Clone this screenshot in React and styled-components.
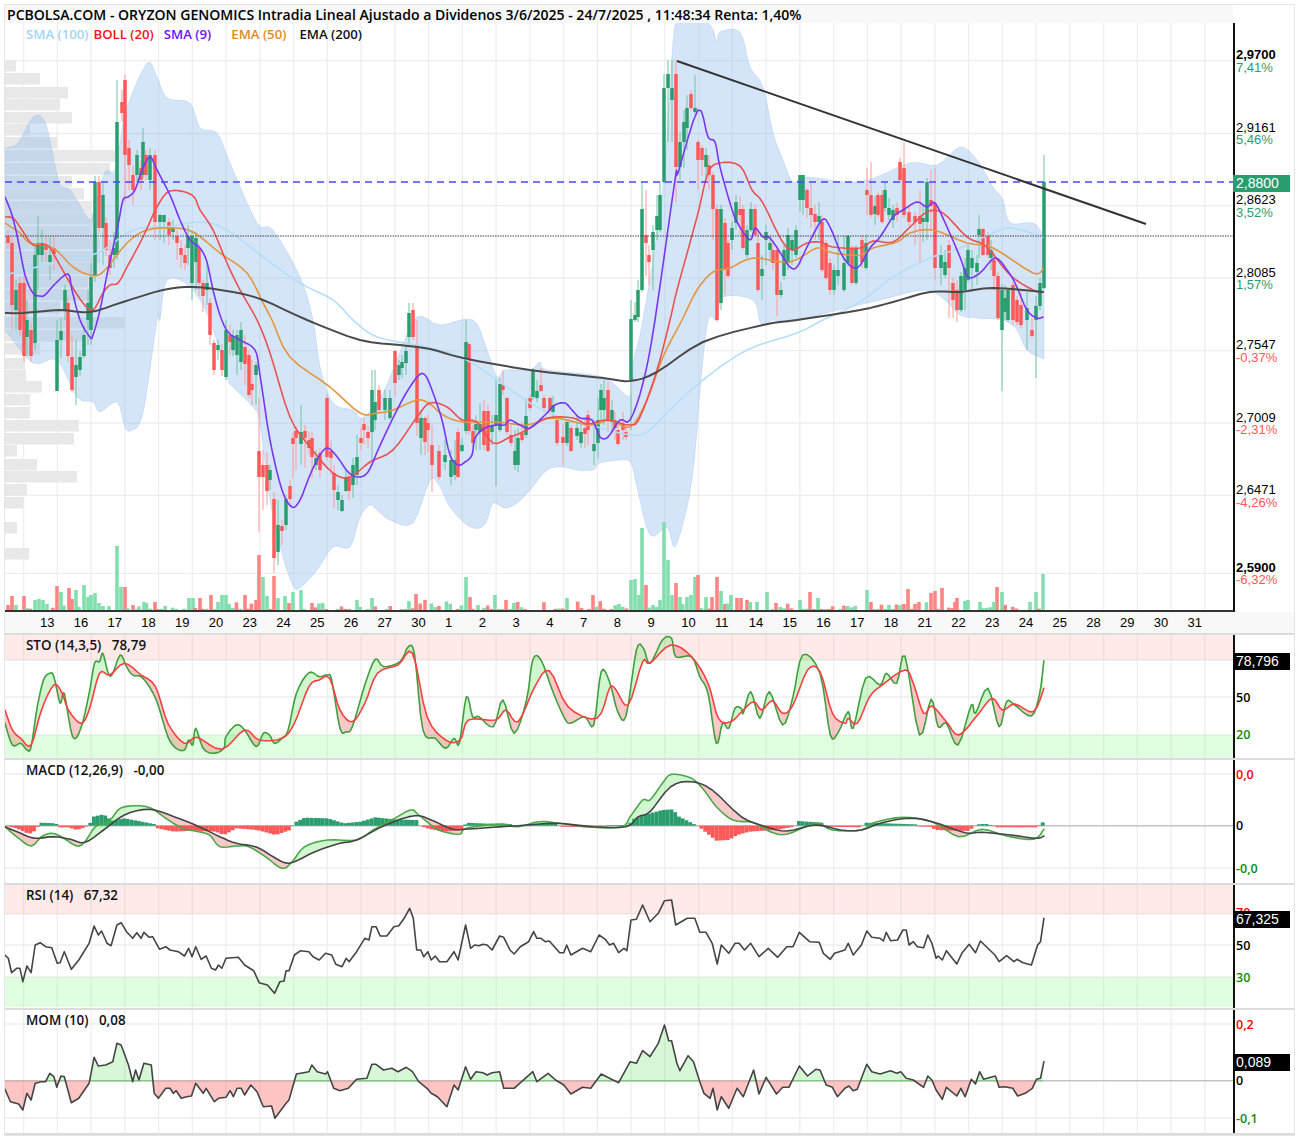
import React from "react";
import styled, { createGlobalStyle } from "styled-components";

const GlobalStyle = createGlobalStyle`
  html, body {
    margin: 0;
    background: #fff;
  }
`;

const UI_FONT = `"Open Sans", "Liberation Sans", sans-serif`;
const AXIS_FONT = `"Liberation Sans", Arial, sans-serif`;

const GREEN = "#2a9d6f";
const RED = "#ff5858";

// ---- helpers ----
const toPath = (pts) =>
  pts.map(([x, y], i) => `${i ? "L" : "M"}${x.toFixed(1)} ${y.toFixed(1)}`).join("");

const interp = (pts, x) => {
  if (x <= pts[0][0]) return pts[0][1];
  for (let i = 1; i < pts.length; i++) {
    if (x <= pts[i][0]) {
      const [x0, y0] = pts[i - 1];
      const [x1, y1] = pts[i];
      return y0 + ((y1 - y0) * (x - x0)) / (x1 - x0 || 1);
    }
  }
  return pts[pts.length - 1][1];
};

// catmull-rom resample, the moving averages are not polylines in the real chart
const smooth = (pts, forwardOnly = true) => {
  const out = [pts[0]];
  for (let i = 0; i < pts.length - 1; i++) {
    const p0 = pts[Math.max(i - 1, 0)];
    const p1 = pts[i];
    const p2 = pts[i + 1];
    const p3 = pts[Math.min(i + 2, pts.length - 1)];
    for (let s = 1; s <= 4; s++) {
      const t = s / 4;
      const at = (k) =>
        0.5 *
        (2 * p1[k] +
          (p2[k] - p0[k]) * t +
          (2 * p0[k] - 5 * p1[k] + 4 * p2[k] - p3[k]) * t * t +
          (3 * p1[k] - p0[k] - 3 * p2[k] + p3[k]) * t * t * t);
      out.push([forwardOnly ? Math.max(out[out.length - 1][0], at(0)) : at(0), at(1)]);
    }
  }
  return out;
};

// the lower panes were read off a crop at 2.412x horizontally and 3x vertically
const fromCrops = (left, right, top) => [
  ...left.map(([x, v]) => [x / 2.412, top + v / 3]),
  ...right.map(([x, v]) => [650 + x / 2.412, top + v / 3]),
];

// polygons between two lines, split by which one is on top
const areasBetween = (a, b, x0, x1) => {
  const up = [];
  const down = [];
  let run = null;
  let dir = 0;
  const close = () => {
    if (!run) return;
    const d = toPath([...run.map((p) => [p[0], p[1]]), ...[...run].reverse().map((p) => [p[0], p[2]])]) + "Z";
    (dir > 0 ? up : down).push({ d, from: run[0][0], to: run[run.length - 1][0] });
  };
  for (let x = x0; x <= x1; x += 0.5) {
    const ya = interp(a, x);
    const yb = interp(b, x);
    const s = ya < yb ? 1 : -1;
    if (s !== dir) {
      close();
      run = run ? [run[run.length - 1]] : [];
      dir = s;
    }
    run.push([x, ya, yb]);
  }
  close();
  return { up, down };
};

let seed = 7;
const rnd = () => {
  seed = (seed * 16807) % 2147483647;
  return seed / 2147483647;
};

// ---- price data ----
const GRID_X = Array.from({ length: 36 }, (_, i) => 23.6 + i * 33.75);
const PRICE_GRID_Y = [60.7, 133.5, 205.7, 278, 350.7, 423, 495.3, 573.3];

const PROFILE = [
  [60, 16], [73, 40], [87, 68], [99, 60], [112, 72], [124, 30], [137, 57], [150, 117], [163, 110],
  [176, 72], [188, 84], [201, 92], [213, 93], [226, 90], [238, 100], [251, 100], [263, 95], [276, 88],
  [289, 92], [302, 60], [317, 125], [330, 83], [343, 40], [358, 25], [370, 26], [381, 42], [394, 30],
  [407, 30], [420, 79], [433, 74], [445, 17], [459, 37], [471, 77], [484, 27], [497, 23], [522, 17], [548, 29],
];

const BAND_UPPER = smooth([
  [5, 148], [18, 143], [33, 117], [45, 122], [55, 165], [60, 185], [70, 190], [80, 205], [90, 220], [95, 205],
  [105, 172], [115, 170], [122, 130], [127, 107], [147, 63], [157, 77], [167, 98], [190, 103], [200, 128], [217, 133],
  [230, 163], [257, 223], [273, 230], [300, 277], [313, 320], [320, 367], [333, 403], [353, 410], [363, 418], [383, 393],
  [400, 352], [417, 317], [440, 325], [473, 320], [487, 350], [497, 377], [505, 370], [530, 370], [540, 362], [547, 370],
  [603, 377], [630, 397], [633, 363], [643, 320], [663, 187], [673, 43], [680, 23], [708, 23], [717, 42], [720, 32],
  [740, 32], [750, 67], [763, 87], [773, 133], [783, 160], [793, 182], [807, 177], [860, 182], [910, 163], [937, 165],
  [960, 147], [977, 160], [993, 187], [1003, 200], [1010, 223], [1033, 223], [1044, 237],
], false);

const BAND_LOWER = smooth([
  [1044, 359], [1027, 350],
  [1017, 330], [1003, 320], [977, 318], [960, 315], [945, 300], [925, 290], [880, 300], [830, 312], [790, 322], [773, 320],
  [767, 324], [760, 322], [753, 300], [723, 297], [717, 320], [708, 320], [700, 390], [697, 430], [693, 470], [687, 507],
  [675, 547], [667, 527], [650, 535], [637, 487], [631, 463], [620, 460], [600, 463], [593, 470], [577, 470], [563, 467],
  [547, 470], [530, 490], [517, 503], [505, 508], [493, 503], [487, 520], [480, 528], [467, 525], [450, 507], [440, 487],
  [430, 480], [413, 523], [390, 520], [377, 510], [370, 505], [360, 517], [350, 547], [333, 547], [317, 570], [300, 588],
  [293, 585], [283, 557], [270, 500], [260, 423], [253, 407], [233, 387], [227, 377], [210, 320], [190, 287], [167, 280],
  [160, 320], [157, 320], [143, 413], [132, 430], [125, 427], [117, 402], [100, 412], [93, 402], [77, 397], [57, 360],
  [33, 363], [5, 330],
], false);

const SMA9 = smooth([
  [5, 197], [12, 215], [18, 240], [25, 275], [33, 293], [40, 296], [45, 295], [55, 284], [68, 274], [72, 290], [80, 320],
  [90, 337], [93, 335], [100, 310], [108, 270], [118, 225], [123, 200], [128, 197], [135, 190], [142, 170], [150, 157],
  [157, 170], [170, 195], [180, 220], [190, 240], [200, 248], [207, 262], [213, 290], [220, 315], [228, 332], [240, 340],
  [255, 350], [260, 375], [270, 440], [282, 490], [292, 507], [300, 500], [310, 475], [320, 455], [328, 448], [338, 458],
  [348, 472], [358, 477], [368, 472], [378, 450], [392, 420], [405, 395], [418, 376], [425, 375], [432, 390], [442, 420],
  [450, 455], [458, 465], [465, 462], [472, 455], [475, 438], [485, 428], [497, 425], [505, 425], [510, 420], [520, 425],
  [530, 428], [545, 415], [555, 405], [565, 403], [572, 410], [580, 418], [592, 420], [600, 437], [608, 437], [620, 420],
  [630, 420], [643, 383], [655, 320], [675, 180], [678, 173], [698, 110], [708, 137], [715, 142], [720, 167], [730, 203],
  [737, 222], [750, 240], [755, 228], [763, 237], [770, 238], [783, 257], [790, 267], [797, 267], [807, 247], [822, 220],
  [830, 227], [843, 257], [857, 268], [870, 248], [880, 237], [893, 217], [903, 210], [917, 202], [927, 207], [935, 203],
  [947, 227], [960, 257], [968, 277], [980, 273], [995, 258], [1007, 270], [1015, 283], [1027, 310], [1037, 318], [1043, 317],
]);

const BOLL = smooth([
  [5, 217], [13, 218], [20, 227], [33, 245], [47, 245], [57, 260], [70, 283], [83, 303], [93, 310], [103, 293], [110, 285],
  [118, 283], [127, 267], [143, 237], [157, 207], [170, 191], [192, 195], [200, 210], [213, 230], [227, 263], [240, 290],
  [257, 320], [270, 353], [290, 417], [310, 447], [333, 473], [350, 477], [370, 462], [393, 450], [417, 417], [430, 403],
  [447, 407], [462, 420], [477, 422], [493, 443], [510, 437], [527, 430], [547, 418], [573, 418], [587, 424], [607, 420],
  [630, 425], [640, 417], [657, 370], [670, 320], [677, 290], [697, 217], [708, 173], [720, 163], [740, 166], [752, 190],
  [763, 203], [787, 248], [807, 243], [820, 242], [833, 247], [860, 248], [873, 241], [893, 242], [910, 227], [927, 212],
  [943, 213], [967, 237], [987, 247], [1010, 275], [1033, 290], [1043, 292],
]);

const EMA50 = smooth([
  [5, 223], [20, 233], [30, 243], [53, 248], [73, 267], [90, 275], [103, 272], [127, 243], [147, 230], [173, 228], [193, 232],
  [220, 253], [247, 273], [263, 303], [272, 320], [290, 357], [330, 387], [360, 413], [377, 413], [393, 410], [417, 400],
  [430, 404], [443, 415], [463, 422], [497, 422], [527, 425], [553, 418], [590, 425], [610, 420], [630, 427], [647, 400],
  [663, 357], [682, 320], [697, 290], [713, 272], [730, 268], [753, 258], [790, 262], [817, 248], [833, 253], [860, 255],
  [873, 248], [897, 242], [910, 233], [933, 230], [967, 243], [993, 248], [1033, 273], [1043, 269],
]);

const EMA200 = smooth([
  [5, 313], [23, 313], [60, 310], [90, 312], [123, 302], [163, 290], [193, 287], [233, 292], [263, 300], [307, 320], [360, 340],
  [400, 345], [430, 349], [463, 358], [530, 370], [603, 378], [630, 381], [657, 372], [703, 342], [763, 325], [797, 320],
  [860, 310], [893, 302], [930, 292], [960, 292], [993, 288], [1043, 292],
]);

const SMA100 = smooth([
  [5, 275], [33, 268], [67, 260], [100, 252], [133, 230], [167, 227], [200, 222], [227, 230], [267, 260], [300, 283], [333, 300],
  [353, 320], [377, 337], [417, 345], [430, 348], [463, 358], [497, 380], [530, 403], [563, 418], [597, 427], [630, 435], [647, 432],
  [670, 410], [703, 380], [747, 350], [797, 333], [823, 320], [860, 302], [893, 277], [930, 258], [960, 248], [1000, 230], [1017, 229], [1043, 237],
]);

// x, body top, body bottom, colour, optional wick top, optional wick bottom
const CANDLES = [
  [8, 236, 243, "r"], [12, 243, 305, "r", 236, 330], [16, 290, 310, "g", 280, 330], [20, 283, 330, "r"], [24, 283, 356, "r"],
  [27, 320, 337, "g", 300, 356], [31, 330, 356, "r"], [35, 255, 343, "g", 243, 350], [38, 243, 255, "g", 216, 290],
  [42, 243, 255, "g", 230, 262], [46, 245, 250, "r", 236, 262], [50, 255, 262, "g", 236, 280], [54, 248, 254, "r", 236, 270],
  [57, 340, 391, "g", 320, 391], [61, 331, 340, "g", 318, 358], [65, 290, 310, "g", 285, 320], [68, 303, 356, "r"], [72, 357, 390, "r", 335, 392],
  [76, 365, 377, "g", 340, 405], [80, 357, 370, "g"], [84, 335, 356, "g", 325, 358], [88, 303, 320, "g", 290, 345],
  [91, 277, 330, "g", 263, 345], [95, 182, 276, "g"], [99, 182, 228, "r"], [103, 195, 228, "g", 182, 265], [106, 223, 250, "r"],
  [110, 255, 268, "r", 240, 275], [114, 248, 255, "g", 232, 268], [117, 122, 255, "g", 80, 260], [122, 102, 113, "r", 90, 122],
  [125, 80, 155, "r", 75, 202], [129, 148, 165, "r", 140, 190], [133, 175, 190, "r", 165, 205], [137, 155, 175, "g", 150, 182],
  [141, 168, 180, "r", 160, 190], [143, 142, 175, "g", 128, 178], [146, 155, 175, "r", 150, 180], [150, 155, 180, "g", 148, 190],
  [155, 155, 222, "r", 150, 240], [160, 215, 222, "g", 214, 240], [164, 215, 222, "g", 215, 243], [169, 222, 235, "r", 218, 245],
  [173, 228, 232, "g", 220, 240], [177, 236, 243, "r", 230, 260], [181, 248, 255, "r", 240, 268], [185, 255, 263, "r", 245, 270],
  [188, 236, 248, "g", 225, 265], [192, 236, 283, "g", 232, 300], [196, 238, 262, "g", 232, 290], [199, 248, 283, "r", 244, 296],
  [203, 283, 296, "r", 280, 312], [207, 283, 290, "g", 262, 305], [210, 303, 335, "r", 298, 345], [214, 343, 370, "r", 340, 375],
  [218, 345, 350, "g", 340, 360], [222, 350, 370, "r"], [226, 330, 377, "g", 320, 380], [230, 335, 342, "r", 325, 355], [233, 336, 350, "g", 330, 356],
  [237, 335, 355, "g", 330, 375], [241, 330, 362, "g", 322, 370], [245, 347, 364, "r", 335, 385], [249, 355, 395, "r", 350, 398], [252, 384, 390, "r", 360, 405],
  [256, 365, 375, "g", 362, 405], [259, 451, 477, "r", 398, 532], [263, 465, 477, "r", 450, 510], [267, 465, 491, "r", 452, 505], [270, 470, 480, "g", 465, 490],
  [274, 499, 558, "r", 492, 573], [278, 525, 552, "g", 500, 565], [282, 526, 531, "r", 520, 545], [286, 499, 525, "g", 495, 530],
  [290, 486, 499, "r", 480, 505], [293, 438, 444, "r", 432, 478], [296, 431, 438, "r", 426, 470], [301, 432, 444, "g", 405, 465],
  [305, 431, 438, "r", 425, 468], [309, 440, 448, "r", 432, 455], [312, 438, 457, "r", 432, 478], [316, 458, 465, "g", 450, 470], [320, 453, 470, "r", 448, 478],
  [327, 398, 457, "r", 394, 460], [331, 451, 458, "r", 440, 475], [334, 473, 490, "r", 465, 508], [338, 492, 500, "g", 485, 510],
  [342, 500, 511, "g", 495, 512], [346, 478, 491, "g", 470, 492], [349, 477, 491, "r", 470, 500], [353, 465, 485, "g", 458, 498], [357, 457, 475, "g", 435, 485],
  [361, 438, 443, "r", 428, 450], [364, 424, 430, "r", 418, 445], [368, 432, 438, "r", 426, 448], [372, 390, 432, "g", 370, 460], [375, 402, 420, "g", 370, 430],
  [379, 390, 410, "r", 385, 412], [385, 398, 410, "g", 390, 420], [390, 398, 418, "g", 390, 420], [395, 351, 383, "r", 350, 396], [399, 365, 375, "g", 360, 380],
  [402, 362, 368, "g", 355, 378], [406, 351, 363, "g", 345, 375], [409, 313, 337, "g", 303, 345], [413, 310, 337, "r", 303, 340], [417, 345, 423, "r", 320, 436],
  [421, 418, 438, "g", 410, 455], [425, 418, 442, "r", 416, 455], [428, 423, 430, "r", 415, 452], [432, 445, 465, "r", 425, 492], [439, 451, 477, "r", 445, 480],
  [445, 455, 462, "g", 440, 470], [451, 460, 477, "g", 450, 485], [455, 460, 475, "g", 440, 480], [458, 432, 477, "r", 428, 478], [462, 445, 451, "g", 438, 452],
  [466, 342, 431, "g", 320, 434], [469, 344, 431, "r", 343, 435], [473, 431, 443, "r", 425, 445], [476, 424, 430, "g", 415, 450], [480, 424, 432, "g", 403, 450],
  [484, 411, 445, "r", 400, 450], [488, 411, 451, "r", 405, 452], [492, 425, 432, "g", 415, 445], [496, 415, 425, "g", 380, 486], [500, 384, 430, "g", 378, 432],
  [503, 385, 390, "r", 370, 395], [507, 398, 432, "r", 397, 435], [511, 435, 443, "r", 425, 446], [515, 451, 465, "g", 430, 470], [518, 438, 465, "g", 428, 472],
  [522, 433, 440, "r", 422, 442], [526, 416, 435, "g", 398, 438], [530, 398, 408, "r", 395, 410], [533, 370, 397, "g", 368, 400], [537, 391, 398, "g", 380, 402],
  [541, 385, 391, "r", 368, 392], [544, 398, 408, "r", 395, 412], [550, 398, 410, "r", 396, 415], [553, 405, 412, "g", 396, 418], [557, 420, 443, "r", 415, 446],
  [563, 437, 443, "r", 424, 465], [567, 422, 443, "g", 420, 446], [571, 428, 451, "r", 425, 452], [577, 428, 436, "g", 415, 440], [581, 432, 443, "g", 420, 448],
  [585, 428, 434, "r", 418, 448], [588, 415, 430, "r", 410, 445], [594, 444, 451, "g", 420, 465], [598, 420, 443, "g", 398, 458], [601, 390, 410, "g", 384, 420],
  [604, 398, 410, "g", 380, 425], [608, 390, 420, "r", 382, 432], [612, 410, 422, "g", 400, 430], [615, 420, 428, "r", 412, 440], [618, 430, 444, "r", 425, 446],
  [623, 424, 430, "r", 412, 440], [626, 432, 437, "r", 424, 440], [631, 319, 380, "g", 300, 430], [635, 315, 320, "g", 302, 322], [638, 290, 317, "g", 280, 322],
  [642, 209, 290, "g", 182, 292], [646, 235, 243, "r", 190, 276], [649, 255, 262, "r", 245, 285], [653, 232, 250, "g", 225, 290], [657, 216, 230, "g", 195, 240],
  [660, 195, 230, "g", 182, 232], [664, 88, 182, "g", 74, 184], [668, 74, 88, "g", 60, 142], [672, 88, 100, "g", 60, 142], [676, 74, 167, "r", 60, 202], [680, 142, 167, "g", 132, 180],
  [684, 122, 142, "g", 110, 168], [687, 108, 128, "g", 95, 150], [691, 94, 108, "r", 90, 110], [695, 108, 112, "g", 75, 115], [698, 142, 160, "r", 140, 190],
  [702, 148, 160, "r", 145, 176], [706, 155, 167, "g", 148, 178], [709, 165, 175, "r", 155, 190], [713, 175, 209, "r", 172, 240], [717, 209, 320, "r", 205, 322],
  [721, 209, 303, "g", 205, 310], [725, 223, 269, "r", 218, 295], [728, 243, 276, "r", 240, 278], [732, 228, 240, "g", 222, 250], [736, 202, 223, "g", 195, 230],
  [740, 209, 215, "r", 196, 235], [743, 209, 248, "r", 205, 250], [747, 230, 255, "g", 225, 258], [751, 209, 230, "g", 202, 232], [755, 209, 235, "r", 205, 236],
  [758, 243, 290, "r", 232, 292], [762, 269, 276, "g", 255, 300], [766, 232, 240, "g", 225, 265], [770, 243, 250, "g", 235, 262], [773, 250, 263, "r", 240, 270],
  [777, 250, 295, "r", 245, 316], [781, 290, 295, "g", 282, 298], [784, 250, 276, "g", 245, 280], [788, 235, 263, "g", 228, 270], [792, 240, 250, "g", 236, 265],
  [796, 230, 255, "g", 225, 258], [800, 175, 200, "g", 175, 212], [803, 175, 200, "g", 190, 215], [807, 190, 208, "r", 188, 218], [811, 208, 215, "r", 182, 228],
  [815, 214, 222, "r", 205, 240], [819, 216, 222, "g", 202, 240], [822, 222, 270, "r", 215, 272], [826, 243, 278, "r", 240, 280], [830, 263, 290, "r", 258, 295],
  [834, 270, 290, "g", 265, 295], [838, 270, 276, "g", 235, 285], [844, 263, 290, "g", 235, 292], [848, 236, 263, "g", 235, 266], [852, 248, 283, "r", 245, 285],
  [856, 248, 283, "g", 245, 285], [862, 240, 262, "r", 235, 268], [866, 243, 268, "g", 235, 270], [867, 190, 195, "r", 168, 215], [871, 195, 215, "r", 162, 218],
  [875, 206, 214, "g", 196, 225], [878, 195, 215, "r", 192, 218], [882, 195, 222, "r", 190, 224], [885, 190, 208, "g", 183, 212], [889, 208, 215, "g", 198, 220],
  [893, 210, 220, "g", 205, 228], [897, 208, 215, "r", 202, 222], [900, 162, 180, "r", 158, 182], [904, 168, 215, "r", 142, 218], [909, 212, 222, "r", 205, 226],
  [915, 216, 222, "r", 212, 245], [920, 216, 224, "r", 190, 263], [923, 218, 222, "g", 205, 242], [927, 182, 222, "g", 178, 240], [931, 200, 206, "r", 170, 230],
  [935, 203, 268, "r", 168, 280], [941, 255, 268, "g", 245, 285], [945, 262, 275, "g", 250, 278], [949, 245, 268, "r", 240, 318], [953, 283, 300, "r", 278, 318],
  [957, 290, 310, "r", 280, 322], [961, 276, 310, "g", 272, 312], [965, 268, 290, "g", 258, 310], [968, 250, 280, "g", 245, 282], [972, 258, 268, "g", 250, 292],
  [977, 263, 272, "g", 255, 285], [979, 229, 235, "g", 215, 258], [983, 229, 255, "r", 228, 256], [988, 235, 255, "r", 232, 258], [991, 250, 258, "g", 240, 270],
  [994, 260, 276, "r", 252, 290], [998, 276, 318, "r", 272, 320], [1002, 290, 330, "g", 284, 391], [1005, 298, 312, "g", 285, 320], [1008, 290, 320, "g", 288, 322],
  [1013, 285, 320, "r", 282, 325], [1017, 300, 322, "r", 296, 325], [1021, 305, 325, "r", 290, 328], [1027, 308, 320, "g", 292, 350], [1032, 330, 336, "r", 318, 338],
  [1036, 306, 320, "g", 296, 378], [1040, 283, 306, "g", 278, 310], [1044, 182, 288, "g", 155, 290],
];

const VOLUME_PICKS = [
  [8, "r", 605], [12, "r", 596], [16, "g", 605], [24, "r", 596], [27, "g", 608], [35, "g", 600], [39, "g", 599], [43, "g", 600], [47, "g", 604],
  [57, "r", 586], [61, "g", 592], [69, "r", 588], [72, "r", 599], [76, "g", 590], [84, "g", 585], [88, "g", 597], [91, "g", 595], [95, "g", 593],
  [99, "g", 603], [103, "g", 606], [117, "g", 546], [121, "g", 587], [125, "r", 587], [133, "r", 605], [144, "g", 602], [155, "r", 602],
  [189, "g", 598], [193, "g", 598], [200, "r", 598], [211, "r", 595], [218, "g", 602], [222, "g", 595], [226, "g", 595], [245, "r", 595], [256, "r", 600],
  [259, "r", 555], [263, "g", 577], [267, "g", 596], [274, "r", 576], [278, "g", 598], [285, "g", 596], [289, "r", 603], [293, "g", 592], [301, "g", 590], [312, "r", 603],
  [357, "g", 600], [372, "g", 598], [416, "r", 594], [425, "r", 600], [466, "g", 577], [470, "r", 597], [478, "g", 605], [495, "g", 595], [506, "r", 600],
  [567, "g", 598], [593, "r", 595], [631, "g", 580], [635, "g", 579], [639, "g", 595], [642, "g", 528], [646, "r", 585], [653, "g", 605], [660, "g", 600], [664, "g", 522],
  [668, "g", 560], [672, "g", 595], [676, "r", 583], [680, "g", 597], [687, "g", 597], [691, "g", 595], [695, "g", 577], [698, "r", 575], [706, "g", 597], [712, "r", 597],
  [717, "r", 577], [721, "g", 591], [725, "r", 604], [731, "g", 595], [737, "r", 598], [741, "r", 598], [747, "r", 600], [757, "g", 602], [767, "g", 592], [776, "r", 603],
  [800, "g", 600], [810, "r", 592], [818, "g", 598], [867, "g", 590], [871, "r", 602], [908, "r", 589], [915, "r", 604], [931, "r", 593], [935, "r", 591], [942, "r", 588],
  [955, "r", 602], [957, "r", 598], [965, "g", 601], [968, "g", 600], [980, "g", 602], [997, "r", 587], [1002, "g", 592], [1030, "g", 602], [1036, "g", 592], [1043, "g", 574],
];

const SLOTS = Array.from({ length: 277 }, (_, i) => 7.7 + i * 3.75);
const VOLUMES = (() => {
  const out = VOLUME_PICKS.map(([x, c, top]) => ({ x, c, top }));
  SLOTS.forEach((x) => {
    if (VOLUME_PICKS.some((p) => Math.abs(p[0] - x) < 2)) return;
    if (rnd() < 0.25) return;
    const r = rnd();
    out.push({ x, c: rnd() > 0.5 ? "g" : "r", top: 609 - r * r * r * 8 });
  });
  return out;
})();

// ---- indicator data ----
const STO_K = smooth(fromCrops(
  [[12,280],[30,345],[50,340],[65,360],[75,350],[90,230],[105,150],[120,130],[130,140],[145,220],[155,190],[175,320],[195,295],[215,190],[228,100],[240,95],[248,70],[260,125],[270,135],[290,75],[305,110],[320,135],[340,140],[360,170],[380,220],[405,320],[425,355],[445,360],[455,330],[465,345],[472,295],[490,355],[515,370],[540,355],[545,320],[570,285],[590,300],[618,350],[635,310],[650,315],[662,340],[680,325],[695,300],[715,190],[745,128],[770,140],[790,135],[800,150],[820,295],[835,305],[850,290],[880,165],[905,88],[925,110],[965,95],[985,50],[1000,75],[1020,300],[1050,325],[1075,355],[1095,325],[1108,340],[1125,200],[1140,260],[1155,260],[1190,290],[1213,210],[1240,310],[1270,210],[1285,90],[1305,90],[1335,190],[1360,260],[1375,280],[1410,260],[1432,285],[1450,125],[1470,155],[1490,245],[1510,258],[1535,60],[1552,55]],
  [[0,100],[30,30],[52,25],[62,80],[100,80],[120,140],[140,190],[160,340],[175,280],[190,295],[205,235],[220,235],[225,250],[243,185],[265,265],[288,185],[320,285],[345,200],[368,75],[410,130],[435,315],[455,305],[478,245],[490,295],[520,145],[555,165],[570,130],[595,160],[615,78],[650,315],[678,208],[695,290],[715,280],[743,345],[775,225],[785,250],[815,175],[842,290],[860,215],[880,225],[920,258],[940,190],[950,92]],
  630
));
const STO_D = smooth(fromCrops(
  [[12,240],[30,300],[50,325],[75,345],[100,240],[130,165],[150,190],[165,240],[195,280],[215,240],[240,130],[265,135],[300,100],[340,135],[375,170],[405,280],[445,340],[475,322],[535,358],[590,300],[625,330],[680,325],[710,280],[745,170],[770,150],[795,145],[820,240],[850,275],[880,220],[910,130],[960,105],[995,70],[1030,260],[1075,330],[1110,330],[1130,270],[1195,270],[1220,240],[1250,275],[1290,170],[1325,122],[1370,230],[1440,265],[1470,175],[1485,178],[1515,225],[1550,95]],
  [[0,100],[50,45],[100,80],[140,160],[165,265],[195,275],[225,240],[250,215],[270,240],[295,212],[320,250],[345,225],[380,120],[410,125],[440,250],[470,280],[478,265],[500,280],[530,200],[560,165],[615,120],[635,160],[660,250],[680,228],[715,275],[745,315],[790,255],[825,205],[850,240],[880,222],[925,245],[950,175]],
  630
));
const MACD_LINE = smooth(fromCrops(
  [[12,590],[40,620],[75,648],[100,620],[125,610],[150,622],[185,648],[205,635],[230,590],[265,570],[290,535],[330,527],[365,535],[400,565],[440,595],[470,603],[505,615],[530,650],[570,648],[600,650],[640,680],[680,715],[705,695],[735,650],[790,630],[860,630],[900,600],[945,570],[990,540],[1010,555],[1050,595],[1080,608],[1110,612],[1125,595],[1200,582],[1250,590],[1300,575],[1350,580],[1430,592],[1500,590],[1520,560],[1550,510]],
  [[0,510],[30,460],[52,433],[100,445],[130,480],[160,530],[200,570],[250,578],[290,605],[330,613],[400,580],[440,600],[510,600],[540,578],[610,562],[680,575],[745,620],[800,598],[860,618],[925,628],[950,598]],
  630
));
const MACD_SIGNAL = smooth(fromCrops(
  [[12,590],[50,610],[85,625],[130,620],[170,628],[205,637],[250,600],[300,555],[360,538],[420,560],[480,590],[530,620],[570,640],[620,652],[680,695],[710,695],[760,665],[820,640],[860,630],[930,585],[1000,557],[1040,570],[1090,597],[1130,597],[1190,592],[1250,587],[1340,580],[1430,590],[1510,590],[1540,560]],
  [[0,545],[50,470],[100,455],[150,480],[220,560],[280,590],[330,603],[400,585],[460,600],[510,600],[560,578],[625,565],[680,575],[760,608],[800,607],[870,615],[930,625],[950,618]],
  630
));
const MACD_HIST = fromCrops(
  [[12,587],[40,595],[70,612],[88,600],[92,587],[95,578],[135,580],[139,587],[145,592],[165,592],[185,600],[205,592],[212,587],[218,578],[225,560],[250,553],[270,572],[300,565],[330,572],[375,583],[380,595],[420,605],[470,602],[520,605],[540,615],[570,595],[620,600],[665,615],[700,600],[705,587],[715,575],[735,563],[790,565],[830,580],[870,575],[905,562],[950,568],[1005,570],[1012,587],[1030,595],[1070,605],[1115,600],[1120,587],[1125,578],[1195,582],[1200,587],[1205,580],[1230,582],[1240,587],[1285,583],[1340,578],[1350,590],[1420,592],[1470,585],[1515,585],[1530,565]],
  [[0,550],[30,540],[55,538],[70,560],[90,572],[110,585],[118,590],[140,612],[160,632],[190,630],[210,615],[240,605],[300,600],[340,592],[352,587],[358,573],[415,578],[420,590],[510,592],[520,578],[640,583],[650,590],[675,590],[690,600],[770,603],[780,590],[795,582],[815,582],[825,587],[838,592],[930,592],[945,580],[955,567]],
  630
);
const RSI_LINE = fromCrops(
  [[12,225],[20,235],[28,278],[40,265],[48,265],[55,305],[65,258],[75,278],[85,195],[97,188],[110,200],[125,203],[138,250],[145,248],[155,215],[172,268],[190,240],[215,190],[227,138],[237,165],[245,153],[258,190],[268,197],[282,135],[292,128],[305,155],[320,175],[330,158],[340,175],[347,157],[360,172],[368,170],[385,208],[400,200],[410,210],[430,215],[445,228],[455,205],[463,230],[472,200],[485,238],[497,228],[510,265],[520,270],[527,255],[535,265],[545,235],[575,232],[590,255],[612,272],[625,308],[645,315],[662,340],[675,305],[685,303],[690,272],[697,272],[710,225],[725,212],[745,215],[755,230],[770,240],[785,220],[800,225],[810,253],[825,260],[835,235],[842,245],[860,215],[880,175],[890,180],[897,140],[907,140],[917,168],[933,168],[950,140],[962,137],[975,115],[988,85],[997,115],[1005,210],[1015,210],[1022,230],[1032,215],[1040,240],[1050,228],[1060,245],[1078,245],[1095,215],[1105,240],[1123,135],[1135,205],[1145,195],[1155,197],[1165,193],[1175,195],[1187,210],[1205,168],[1215,172],[1230,210],[1240,222],[1255,200],[1275,185],[1287,155],[1295,175],[1305,175],[1315,185],[1325,183],[1350,218],[1360,218],[1367,195],[1377,225],[1405,205],[1425,215],[1445,165],[1460,178],[1470,195],[1480,190],[1492,218],[1505,205],[1512,212],[1522,120],[1535,118],[1550,75]],
  [[0,125],[20,100],[35,62],[52,60],[62,135],[90,115],[108,115],[120,157],[135,157],[150,190],[162,252],[172,195],[190,220],[205,190],[215,190],[228,210],[243,190],[263,230],[285,205],[308,232],[330,200],[345,200],[360,157],[385,185],[408,187],[418,220],[435,238],[445,220],[470,210],[478,190],[490,225],[510,195],[523,153],[535,172],[555,175],[563,183],[570,157],[580,182],[597,180],[610,150],[618,150],[625,195],[635,185],[645,200],[660,203],[670,165],[680,190],[690,235],[695,228],[705,240],[715,212],[740,252],[752,220],[770,193],[785,218],[797,183],[832,225],[842,245],[860,227],[878,245],[885,238],[900,248],[920,255],[935,195],[942,185],[950,115]],
  880
);
const MOM_LINE = fromCrops(
  [[12,628],[25,665],[45,672],[55,690],[65,640],[75,660],[85,610],[100,605],[110,605],[120,580],[130,590],[137,622],[147,588],[155,590],[172,668],[190,655],[215,610],[227,532],[237,558],[255,555],[272,545],[282,490],[292,495],[310,555],[320,605],[327,570],[335,600],[347,550],[365,555],[372,640],[382,655],[400,625],[410,625],[418,640],[425,632],[437,655],[450,650],[462,648],[472,610],[490,640],[497,625],[517,665],[527,655],[545,652],[555,632],[563,650],[572,625],[582,625],[590,645],[605,615],[620,635],[635,680],[655,678],[663,715],[690,670],[697,660],[715,582],[745,575],[752,555],[765,575],[785,582],[790,575],[805,625],[820,632],[840,625],[860,598],[885,595],[897,553],[907,553],[925,570],[945,565],[960,575],[980,562],[995,575],[1010,605],[1030,625],[1040,640],[1055,650],[1078,680],[1095,615],[1105,630],[1123,560],[1135,598],[1148,575],[1165,578],[1175,585],[1187,578],[1205,575],[1215,625],[1240,625],[1285,575],[1295,605],[1322,580],[1340,600],[1360,615],[1377,642],[1405,622],[1425,625],[1450,582],[1475,598],[1492,608],[1520,545],[1535,550],[1550,512]],
  [[0,530],[20,490],[35,435],[45,482],[52,482],[65,550],[72,572],[92,527],[105,545],[120,605],[130,640],[145,655],[152,625],[162,690],[172,650],[190,685],[210,625],[225,650],[250,570],[263,642],[280,592],[305,642],[320,622],[335,622],[360,558],[380,588],[400,568],[410,570],[425,615],[440,622],[452,650],[470,625],[480,618],[490,632],[500,628],[510,595],[523,553],[535,575],[555,582],[580,572],[595,580],[605,575],[618,595],[635,600],[660,622],[670,588],[680,600],[690,630],[705,658],[715,622],[740,648],[750,625],[760,650],[775,598],[785,612],[795,575],[805,598],[833,588],[842,622],[855,620],[875,625],[887,648],[905,640],[922,625],[932,598],[942,595],[950,545]],
  880
);

const DATES = [13,16,17,18,19,20,23,24,25,26,27,30,1,2,3,4,7,8,9,10,11,14,15,16,17,18,21,22,23,24,25,28,29,30,31];

// ---- layout ----
const Frame = styled.div`
  box-sizing: border-box;
  width: 1291px;
  margin: 4px 0 0 4px;
  border: 1px solid #e6e4e4;
  background: #fff;
`;

const TitleBar = styled.div`
  width: 1228px;
  height: 18px;
  padding-left: 2px;
  box-sizing: border-box;
  background: #f9f8f8;
  color: #000;
  font: 600 14.05px/19px ${UI_FONT};
  white-space: nowrap;
`;

const Row = styled.div`
  display: flex;
  box-sizing: border-box;
  height: ${(p) => p.$height}px;
  border-bottom: ${(p) => (p.$divider ? "2px solid #dcdcdc" : "none")};
`;

const Plot = styled.div`
  position: relative;
  width: 1228px;
  height: ${(p) => p.$height}px;
  border-right: 2px solid #111;
  border-bottom: ${(p) => (p.$baseline ? "2px solid #333" : "none")};
`;

const Chart = styled.svg`
  display: block;
  width: 100%;
  height: 100%;
`;

const AxisColumn = styled.div`
  position: relative;
  flex: 1;
`;

const PriceTick = styled.div`
  position: absolute;
  left: 1px;
  top: ${(p) => p.$y}px;
  color: ${(p) => p.$color || "#000"};
  font: ${(p) => (p.$bold ? 600 : 400)} 13px/12px ${AXIS_FONT};
  white-space: nowrap;
`;

const PaneTick = styled.div`
  position: absolute;
  left: 1px;
  top: ${(p) => p.$y}px;
  color: ${(p) => p.$color || "#000"};
  font: 600 12.5px/14px ${UI_FONT};
`;

const ValueTag = styled.div`
  position: absolute;
  left: -2px;
  top: ${(p) => p.$y}px;
  box-sizing: border-box;
  width: 57px;
  height: 17px;
  padding-left: 3px;
  background: ${(p) => p.$bg};
  color: #fff;
  font: 400 14px/17px ${AXIS_FONT};
`;

const Legend = styled.div`
  position: absolute;
  left: 21px;
  top: 3px;
  display: flex;
  font: 600 13.2px/16px ${UI_FONT};
  white-space: nowrap;
`;

const LegendItem = styled.span`
  color: ${(p) => p.$color};
  margin-right: ${(p) => p.$gap}px;
`;

const PaneLabel = styled.div`
  position: absolute;
  left: 21px;
  top: 2px;
  color: #111;
  font: 600 13.4px/16px ${UI_FONT};
  white-space: pre;
`;

const DateRow = styled.div`
  display: flex;
  box-sizing: border-box;
  height: 23px;
  padding-left: 35px;
  background: #f8f8f8;
  border-bottom: 2px solid #dcdcdc;
`;

const DateCell = styled.div`
  flex: 0 0 33.75px;
  color: #000;
  font: 400 13px/22px ${AXIS_FONT};
`;

// ---- drawing parts ----
const GridLines = ({ ys, top, bottom }) => (
  <g stroke="#eeeeee" strokeWidth="1.3">
    {GRID_X.map((x) => (
      <line key={x} x1={x} x2={x} y1={top} y2={bottom} />
    ))}
    {ys.map((y) => (
      <line key={y} x1="5" x2="1233" y1={y} y2={y} />
    ))}
  </g>
);

const Candle = ({ x, top, bottom, kind, wickTop, wickBottom }) => {
  const body = kind === "g" ? GREEN : RED;
  const wick = kind === "g" ? "#70c4a0" : "#ff9a9a";
  return (
    <g>
      <line x1={x} x2={x} y1={wickTop ?? top - 6} y2={wickBottom ?? bottom + 6} stroke={wick} strokeWidth="1" />
      <rect x={x - 1.75} width="3.5" y={top} height={bottom - top} fill={body} />
    </g>
  );
};

const Line = ({ pts, color, width = 1.6 }) => (
  <path d={toPath(pts)} fill="none" stroke={color} strokeWidth={width} strokeLinejoin="round" strokeLinecap="round" />
);

const PriceChart = () => (
  <Chart viewBox="5 23 1228 587" preserveAspectRatio="none">
    <GridLines ys={PRICE_GRID_Y} top={23} bottom={611} />
    {PROFILE.map(([y, x]) => (
      <rect key={y} x="5" y={y} width={x - 5} height="11.5" fill="#e8e8e8" />
    ))}
    <path
      d={toPath([...BAND_UPPER, ...BAND_LOWER]) + "Z"}
      fill="rgba(148,190,237,0.4)"
      stroke="rgba(148,190,237,0.35)"
    />
    {VOLUMES.map((v, i) => (
      <rect key={i} x={v.x - 1.8} width="3.6" y={v.top} height={611 - v.top} fill={v.c === "g" ? "#82dfad" : "#ff8585"} />
    ))}
    {CANDLES.map(([x, top, bottom, kind, wickTop, wickBottom]) => (
      <Candle key={x} x={x} top={top} bottom={bottom} kind={kind} wickTop={wickTop} wickBottom={wickBottom} />
    ))}
    <Line pts={SMA100} color="#b5def9" />
    <Line pts={EMA50} color="#e3963e" />
    <Line pts={BOLL} color="#ee5050" />
    <Line pts={SMA9} color="#7a35f5" />
    <Line pts={EMA200} color="#4a4a4a" width={2} />
    <line x1="5" x2="1233" y1="182" y2="182" stroke="#4848ff" strokeWidth="1.4" strokeDasharray="7 5" />
    <line x1="5" x2="1233" y1="236" y2="236" stroke="#444" strokeWidth="1.2" strokeDasharray="1.5 1" />
    <line x1="677" y1="61" x2="1146" y2="224" stroke="#333" strokeWidth="2" />
  </Chart>
);

const Bands = ({ top, bottom, highTo, lowFrom }) => (
  <g>
    <rect x="5" y={top} width="1228" height={highTo - top} fill="rgba(255,150,150,0.2)" />
    <rect x="5" y={lowFrom} width="1228" height={bottom - lowFrom} fill="rgba(120,255,120,0.23)" />
  </g>
);

const StoChart = () => {
  const { up, down } = areasBetween(STO_K, STO_D, 5, 1043);
  return (
    <Chart viewBox="5 635 1228 123" preserveAspectRatio="none">
      <GridLines ys={[660, 697, 735]} top={635} bottom={758} />
      <Bands top={635} bottom={758} highTo={660} lowFrom={735} />
      {up.map((a, i) => <path key={i} d={a.d} fill="rgba(60,220,60,0.24)" />)}
      {down.map((a, i) => <path key={i} d={a.d} fill="rgba(235,60,60,0.27)" />)}
      <Line pts={STO_K} color="#3f9f3f" />
      <Line pts={STO_D} color="#f44040" />
    </Chart>
  );
};

const MacdChart = () => {
  const { up, down } = areasBetween(MACD_LINE, MACD_SIGNAL, 5, 1043);
  return (
    <Chart viewBox="5 760 1228 123" preserveAspectRatio="none">
      <GridLines ys={[774, 868]} top={760} bottom={883} />
      <line x1="5" x2="1233" y1="825.7" y2="825.7" stroke="#c4c4c4" strokeWidth="1.6" />
      {SLOTS.map((x) => {
        const y = interp(MACD_HIST, x);
        const isUp = y < 825.7;
        return (
          <rect
            key={x}
            x={x - 1.9}
            width="3.8"
            y={isUp ? y : 825.7}
            height={Math.abs(y - 825.7)}
            fill={isUp ? GREEN : RED}
          />
        );
      })}
      {up.map((a, i) => <path key={i} d={a.d} fill="rgba(60,220,60,0.24)" />)}
      {down.map((a, i) => <path key={i} d={a.d} fill="rgba(235,60,60,0.27)" />)}
      <Line pts={MACD_LINE} color="#4aa84a" />
      <Line pts={MACD_SIGNAL} color="#444" />
    </Chart>
  );
};

const RsiChart = () => (
  <Chart viewBox="5 885 1228 123" preserveAspectRatio="none">
    <GridLines ys={[914, 945, 977]} top={885} bottom={1008} />
    <Bands top={885} bottom={1007} highTo={914} lowFrom={977} />
    <Line pts={RSI_LINE} color="#444" />
  </Chart>
);

const MomChart = () => {
  const zero = [[5, 1080.7], [1043, 1080.7]];
  const { up, down } = areasBetween(MOM_LINE, zero, 5, 1043);
  return (
    <Chart viewBox="5 1010 1228 123" preserveAspectRatio="none">
      <GridLines ys={[1024, 1118]} top={1010} bottom={1133} />
      <line x1="5" x2="1233" y1="1080.7" y2="1080.7" stroke="#c4c4c4" strokeWidth="1.6" />
      {up.map((a, i) => (
        <g key={i}>
          <path d={a.d} fill="rgba(70,225,70,0.22)" />
          <line x1={a.from} x2={a.to} y1="1080.7" y2="1080.7" stroke="#86c886" strokeWidth="1.4" />
        </g>
      ))}
      {down.map((a, i) => <path key={i} d={a.d} fill="rgba(255,60,60,0.3)" />)}
      <Line pts={MOM_LINE} color="#444" />
    </Chart>
  );
};

const PRICE_TICKS = [
  ["2,9700", "7,41%", 54, 67, true, GREEN],
  ["2,9161", "5,46%", 127, 139, false, GREEN],
  ["2,8623", "3,52%", 199, 212, false, GREEN],
  ["2,8085", "1,57%", 272, 284, false, GREEN],
  ["2,7547", "-0,37%", 344, 357, false, RED],
  ["2,7009", "-2,31%", 417, 429, false, RED],
  ["2,6471", "-4,26%", 489, 502, false, RED],
  ["2,5900", "-6,32%", 567, 579, true, RED],
];

const IndicatorPane = ({ top, chart, label, ticks, tag }) => (
  <Row $height={125} $divider>
    <Plot $height={123}>
      {chart}
      <PaneLabel>{label}</PaneLabel>
    </Plot>
    <AxisColumn>
      {ticks.map(([text, y, color]) => (
        <PaneTick key={text} $y={y - top - 6} $color={color}>
          {text}
        </PaneTick>
      ))}
      {tag && (
        <ValueTag $y={tag[1] - top} $bg="#000">
          {tag[0]}
        </ValueTag>
      )}
    </AxisColumn>
  </Row>
);

export default function App() {
  return (
    <>
      <GlobalStyle />
      <Frame>
        <TitleBar>
          PCBOLSA.COM - ORYZON GENOMICS Intradia Lineal Ajustado a Dividenos 3/6/2025 - 24/7/2025 , 11:48:34 Renta: 1,40%
        </TitleBar>
        <Row $height={589}>
          <Plot $height={587} $baseline>
            <PriceChart />
            <Legend>
              <LegendItem $color="#9fd6fb" $gap={5}>SMA (100)</LegendItem>
              <LegendItem $color="#ff1010" $gap={10}>BOLL (20)</LegendItem>
              <LegendItem $color="#6a14ff" $gap={20}>SMA (9)</LegendItem>
              <LegendItem $color="#e58a1f" $gap={13}>EMA (50)</LegendItem>
              <LegendItem $color="#111" $gap={0}>EMA (200)</LegendItem>
            </Legend>
          </Plot>
          <AxisColumn>
            {PRICE_TICKS.map(([price, pct, y1, y2, bold, color]) => (
              <React.Fragment key={price}>
                <PriceTick $y={y1 - 23 - 5} $bold={bold}>{price}</PriceTick>
                <PriceTick $y={y2 - 23 - 5} $color={color}>{pct}</PriceTick>
              </React.Fragment>
            ))}
            <ValueTag $y={152} $bg={GREEN}>2,8800</ValueTag>
          </AxisColumn>
        </Row>
        <DateRow>
          {DATES.map((d, i) => (
            <DateCell key={i}>{d}</DateCell>
          ))}
        </DateRow>
        <IndicatorPane
          top={635}
          chart={<StoChart />}
          label={"STO (14,3,5)   78,79"}
          ticks={[["50", 697], ["20", 734, "#0a8a0a"]]}
          tag={["78,796", 653]}
        />
        <IndicatorPane
          top={760}
          chart={<MacdChart />}
          label={"MACD (12,26,9)   -0,00"}
          ticks={[["0,0", 774, "#f00"], ["0", 825], ["-0,0", 868, "#0a8a0a"]]}
        />
        <IndicatorPane
          top={885}
          chart={<RsiChart />}
          label={"RSI (14)   67,32"}
          ticks={[["70", 912, "#f00"], ["50", 945], ["30", 977, "#0a8a0a"]]}
          tag={["67,325", 911]}
        />
        <IndicatorPane
          top={1010}
          chart={<MomChart />}
          label={"MOM (10)   0,08"}
          ticks={[["0,2", 1024, "#f00"], ["0", 1080], ["-0,1", 1118, "#0a8a0a"]]}
          tag={["0,089", 1054]}
        />
      </Frame>
    </>
  );
}
